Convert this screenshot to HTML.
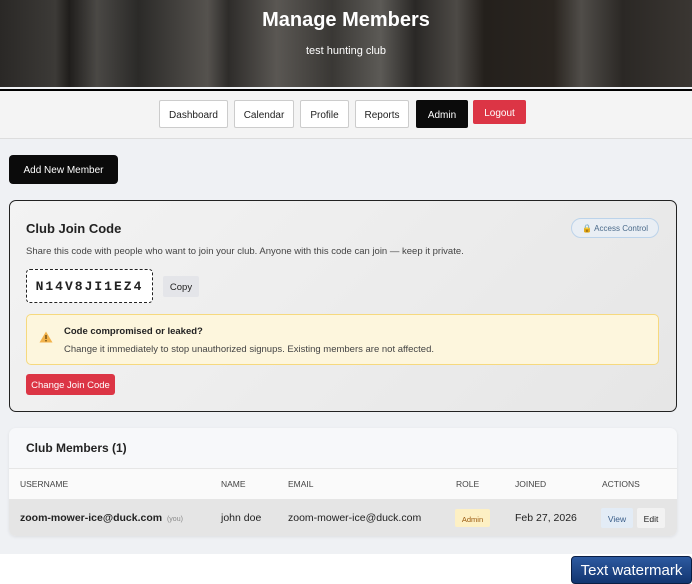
<!DOCTYPE html>
<html><head><style>
*{box-sizing:border-box;margin:0;padding:0}
body{width:692px;height:584px;overflow:hidden;background:#fff;font-family:"Liberation Sans",sans-serif;position:relative;color:#222}
.a{position:absolute}
.hdr{left:0;top:0;width:692px;height:87px;background:linear-gradient(90deg,#2a2826 0%,#3c3a37 8%,#201e1c 10%,#4a4845 14%,#2b2a28 20%,#55524e 30%,#2e2c2a 33%,#5a5753 40%,#3a3835 48%,#5c5a56 55%,#2a2826 60%,#4d4a46 66%,#24201c 70%,#2a2520 80%,#504d49 84%,#2b2825 90%,#3a3632 100%)}
.nav{left:0;top:89px;width:692px;height:50px;background:#f4f4f4;border-bottom:1px solid #ddd;border-top:2px solid #000}
.btn{position:absolute;font-size:10px;display:flex;align-items:center;justify-content:center;border-radius:2px;padding-top:2px}
.nb{top:100px;height:28px;background:#fff;border:1px solid #ccc;color:#222}
</style></head><body>
<div class="a" style="left:0;top:87px;width:692px;height:467px;background:#eff1f4"></div>
<div class="a hdr"></div>
<div class="a" style="left:0;top:9px;width:692px;text-align:center;color:#fff;font-size:20px;font-weight:bold">Manage Members</div>
<div class="a" style="left:0;top:45px;width:692px;text-align:center;color:#fff;font-size:11px">test hunting club</div>
<div class="a nav"></div>
<div class="btn nb" style="left:159px;width:69px">Dashboard</div>
<div class="btn nb" style="left:234px;width:60px">Calendar</div>
<div class="btn nb" style="left:300px;width:49px">Profile</div>
<div class="btn nb" style="left:355px;width:54px">Reports</div>
<div class="btn nb" style="left:416px;width:52px;background:#0b0b0b;border-color:#0b0b0b;color:#fff">Admin</div>
<div class="btn" style="left:473px;top:100px;width:53px;height:24px;background:#dc3545;color:#fff">Logout</div>
<div class="btn" style="left:9px;top:155px;width:109px;height:29px;background:#0b0b0b;color:#fff;border-radius:4px">Add New Member</div>
<div class="a" style="left:9px;top:200px;width:668px;height:212px;border:1px solid #222;border-radius:7px;background:linear-gradient(135deg,#f3f3f3,#e6e6e6)"></div>
<div class="a" style="left:26px;top:221px;font-size:13px;font-weight:bold">Club Join Code</div>
<div class="a" style="left:571px;top:218px;width:88px;height:20px;border:1px solid #bcd3ea;background:#e9eef4;border-radius:10px;font-size:8px;color:#4a6a8a;display:flex;align-items:center;justify-content:center">🔒&nbsp;Access Control</div>
<div class="a" style="left:26px;top:246px;font-size:9.5px;color:#444">Share this code with people who want to join your club. Anyone with this code can join — keep it private.</div>
<div class="a" style="left:26px;top:269px;width:127px;height:34px;border:1px dashed #222;border-radius:4px;background:#fff;font-family:'Liberation Mono',monospace;font-weight:bold;font-size:13px;letter-spacing:2px;display:flex;align-items:center;justify-content:center">N14V8JI1EZ4</div>
<div class="btn" style="left:163px;top:276px;width:36px;height:21px;background:#e4e5e9;font-size:9.5px">Copy</div>
<div class="a" style="left:26px;top:314px;width:633px;height:51px;background:#fdf6dd;border:1px solid #f6d97e;border-radius:5px"></div>
<svg class="a" style="left:39px;top:331px" width="14" height="12" viewBox="0 0 14 12"><path d="M7 0.5L13.5 11.5H0.5Z" fill="#f2b24a"/><rect x="6.3" y="4" width="1.4" height="4" fill="#6b4a10"/><rect x="6.3" y="9" width="1.4" height="1.4" fill="#6b4a10"/></svg>
<div class="a" style="left:64px;top:326px;font-size:9.5px;font-weight:bold">Code compromised or leaked?</div>
<div class="a" style="left:64px;top:344px;font-size:9.5px;color:#444">Change it immediately to stop unauthorized signups. Existing members are not affected.</div>
<div class="btn" style="left:26px;top:374px;width:89px;height:21px;background:#dc3545;color:#fff;font-size:9.5px;border-radius:3px">Change Join Code</div>
<div class="a" style="left:9px;top:428px;width:668px;height:108px;background:#f7f8fa;border-radius:7px;overflow:hidden;box-shadow:0 1px 3px rgba(0,0,0,.08)">
<div class="a" style="left:0;top:40px;width:668px;height:31px;background:#fafafa;border-top:1px solid #e6e6e6"></div>
<div class="a" style="left:0;top:71px;width:668px;height:37px;background:#e5e5e5"></div>
</div>
<div class="a" style="left:26px;top:441px;font-size:12px;font-weight:bold">Club Members (1)</div>
<div class="a" style="top:479px;left:20px;font-size:8.5px;color:#444">USERNAME</div>
<div class="a" style="top:479px;left:221px;font-size:8.5px;color:#444">NAME</div>
<div class="a" style="top:479px;left:288px;font-size:8.5px;color:#444">EMAIL</div>
<div class="a" style="top:479px;left:456px;font-size:8.5px;color:#444">ROLE</div>
<div class="a" style="top:479px;left:515px;font-size:8.5px;color:#444">JOINED</div>
<div class="a" style="top:479px;left:602px;font-size:8.5px;color:#444">ACTIONS</div>
<div class="a" style="top:512px;left:20px;font-size:10.5px;font-weight:bold">zoom-mower-ice@duck.com <span style="font-weight:normal;font-size:7px;color:#888">&nbsp;(you)</span></div>
<div class="a" style="top:512px;left:221px;font-size:10.5px">john doe</div>
<div class="a" style="top:512px;left:288px;font-size:10.5px">zoom-mower-ice@duck.com</div>
<div class="btn" style="top:509px;left:455px;width:35px;height:18px;background:#fdf0c4;color:#9a5a10;font-size:7.5px">Admin</div>
<div class="a" style="top:512px;left:515px;font-size:10.5px">Feb 27, 2026</div>
<div class="btn" style="top:508px;left:601px;width:32px;height:20px;background:#e3ecf6;color:#3a5e8a;font-size:8.5px">View</div>
<div class="btn" style="top:508px;left:637px;width:28px;height:20px;background:#f2f2f2;font-size:8.5px">Edit</div>
<div class="btn" style="left:571px;top:556px;width:121px;height:28px;background:linear-gradient(#2d5aa0,#123570);border:1px solid #0a1e44;border-radius:4px;color:#fff;font-size:15px;padding-top:0">Text watermark</div>
</body></html>
